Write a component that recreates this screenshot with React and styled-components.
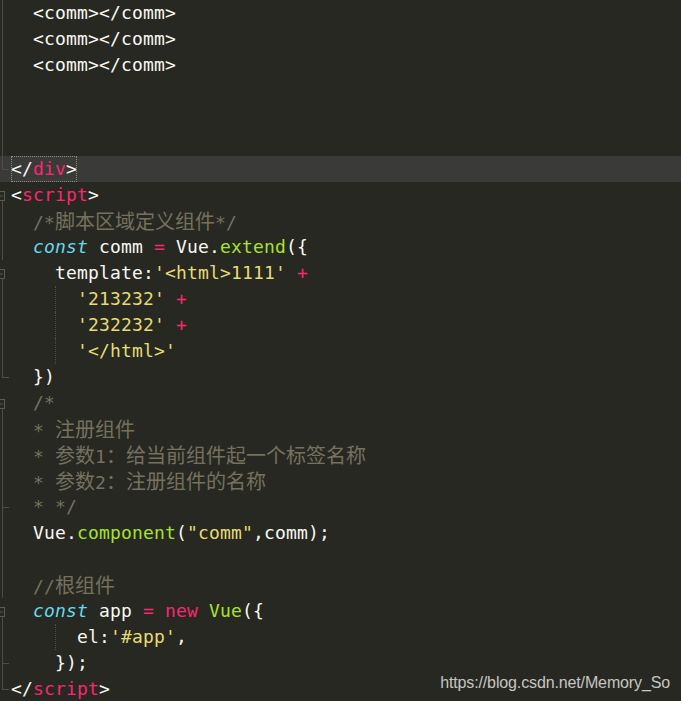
import React from "react";
import styled, { createGlobalStyle, css } from "styled-components";

const GlobalStyle = createGlobalStyle`
  html, body {
    margin: 0;
    padding: 0;
    background: #272822;
  }
  body {
    width: 681px;
    height: 701px;
    overflow: hidden;
  }
`;

const palette = {
  t: "#f8f8f2",
  k: "#f92672",
  s: "#e6db74",
  f: "#a6e22e",
  c: "#66d9ef",
  m: "#75715e",
};

// gutter: v = fold line, end = closing corner, vt = line with tick, box = fold toggle
const lines = [
  { g: "v", code: [["t", "  <comm></comm>"]] },
  { g: "v", code: [["t", "  <comm></comm>"]] },
  { g: "v", code: [["t", "  <comm></comm>"]] },
  { g: "v", code: [] },
  { g: "v", code: [] },
  { g: "v", code: [] },
  { g: "end", active: true, match: true, code: [["t", "</"], ["k", "div"], ["t", ">"]] },
  { g: "box", code: [["t", "<"], ["k", "script"], ["t", ">"]] },
  { g: "v", code: [["t", "  "], ["m", "/*脚本区域定义组件*/"]] },
  {
    g: "v",
    code: [
      ["t", "  "], ["c", "const"], ["t", " comm "], ["k", "="], ["t", " Vue."],
      ["f", "extend"], ["t", "({"],
    ],
  },
  {
    g: "box",
    code: [["t", "    template:"], ["s", "'<html>1111'"], ["t", " "], ["k", "+"]],
  },
  { g: "v", guide: 4, code: [["t", "      "], ["s", "'213232'"], ["t", " "], ["k", "+"]] },
  { g: "v", guide: 4, code: [["t", "      "], ["s", "'232232'"], ["t", " "], ["k", "+"]] },
  { g: "v", guide: 4, code: [["t", "      "], ["s", "'</html>'"]] },
  { g: "end", code: [["t", "  })"]] },
  { g: "box", code: [["t", "  "], ["m", "/*"]] },
  { g: "v", code: [["t", "  "], ["m", "* 注册组件"]] },
  { g: "v", code: [["t", "  "], ["m", "* 参数1：给当前组件起一个标签名称"]] },
  { g: "v", code: [["t", "  "], ["m", "* 参数2：注册组件的名称"]] },
  { g: "vt", code: [["t", "  "], ["m", "* */"]] },
  {
    g: "v",
    code: [
      ["t", "  Vue."], ["f", "component"], ["t", "("], ["s", "\"comm\""], ["t", ",comm);"],
    ],
  },
  { g: "v", code: [] },
  { g: "v", code: [["t", "  "], ["m", "//根组件"]] },
  {
    g: "box",
    code: [
      ["t", "  "], ["c", "const"], ["t", " app "], ["k", "="], ["t", " "], ["k", "new"],
      ["t", " "], ["f", "Vue"], ["t", "({"],
    ],
  },
  { g: "v", guide: 4, code: [["t", "      el:"], ["s", "'#app'"], ["t", ","]] },
  { g: "vt", code: [["t", "    });"]] },
  { g: "end", code: [["t", "</"], ["k", "script"], ["t", ">"]] },
];

const Editor = styled.div`
  position: relative;
  width: 681px;
  height: 701px;
  overflow: hidden;
  background: #272822;
  font-family: "DejaVu Sans Mono", "Liberation Mono", monospace;
  font-size: 18px;
  letter-spacing: 0.16px;
  color: #f8f8f2;
`;

const Row = styled.div`
  position: relative;
  display: flex;
  height: 26px;
  line-height: 26px;
  background: ${(p) => (p.$active ? "#3a3a38" : "transparent")};
  ${(p) =>
    p.$guide != null &&
    css`
      &::before {
        content: "";
        position: absolute;
        left: ${11 + p.$guide * 11}px;
        top: 0;
        bottom: 0;
        border-left: 1px dotted #4f4f48;
      }
    `}
`;

const Gutter = styled.div`
  flex: none;
  width: 11px;
  height: 26px;
  svg {
    display: block;
  }
`;

const Code = styled.div`
  white-space: pre;
`;

const Tok = styled.span`
  color: ${(p) => palette[p.$type]};
  font-style: ${(p) => (p.$type === "c" ? "italic" : "normal")};
`;

const Cjk = styled.span`
  font-family: "Noto Sans CJK SC", "Noto Sans CJK JP", sans-serif;
  font-size: 20px;
  letter-spacing: 0;
`;

const Match = styled.span`
  display: inline-block;
  height: 26px;
  vertical-align: top;
  outline: 1px dotted #8c8c84;
  outline-offset: -1px;
`;

const Watermark = styled.div`
  position: absolute;
  right: 11px;
  bottom: 9px;
  font-family: "Liberation Sans", Arial, sans-serif;
  font-size: 16px;
  letter-spacing: -0.13px;
  color: rgba(235, 235, 230, 0.82);
`;

const FOLD = "#4d4c46";

function Marker({ kind }) {
  return (
    <svg width="11" height="26" viewBox="0 0 11 26">
      {kind === "v" && <line x1="2.5" y1="0" x2="2.5" y2="26" stroke={FOLD} />}
      {kind === "vt" && (
        <>
          <line x1="2.5" y1="0" x2="2.5" y2="26" stroke={FOLD} />
          <line x1="2" y1="13.5" x2="9" y2="13.5" stroke={FOLD} />
        </>
      )}
      {kind === "end" && (
        <>
          <line x1="2.5" y1="0" x2="2.5" y2="13.5" stroke={FOLD} />
          <line x1="2" y1="13.5" x2="9" y2="13.5" stroke={FOLD} />
        </>
      )}
      {kind === "box" && (
        <>
          <rect x="-4.5" y="9.5" width="9" height="9" fill="none" stroke="#5a5952" />
          <line x1="-2" y1="14" x2="3" y2="14" stroke="#5a5952" />
          <line x1="2.5" y1="18.5" x2="2.5" y2="26" stroke={FOLD} />
        </>
      )}
    </svg>
  );
}

function renderText(text) {
  return text
    .split(/([\u3000-\u9fff\uff00-\uffef]+)/)
    .filter(Boolean)
    .map((part, i) =>
      /[\u3000-\u9fff\uff00-\uffef]/.test(part) ? <Cjk key={i}>{part}</Cjk> : part
    );
}

export default function App() {
  return (
    <>
      <GlobalStyle />
      <Editor>
        {lines.map((line, i) => {
          const tokens = line.code.map(([type, text], j) => (
            <Tok key={j} $type={type}>
              {renderText(text)}
            </Tok>
          ));
          return (
            <Row key={i} $active={line.active} $guide={line.guide}>
              <Gutter>
                <Marker kind={line.g} />
              </Gutter>
              <Code>{line.match ? <Match>{tokens}</Match> : tokens}</Code>
            </Row>
          );
        })}
        <Watermark>https://blog.csdn.net/Memory_So</Watermark>
      </Editor>
    </>
  );
}
